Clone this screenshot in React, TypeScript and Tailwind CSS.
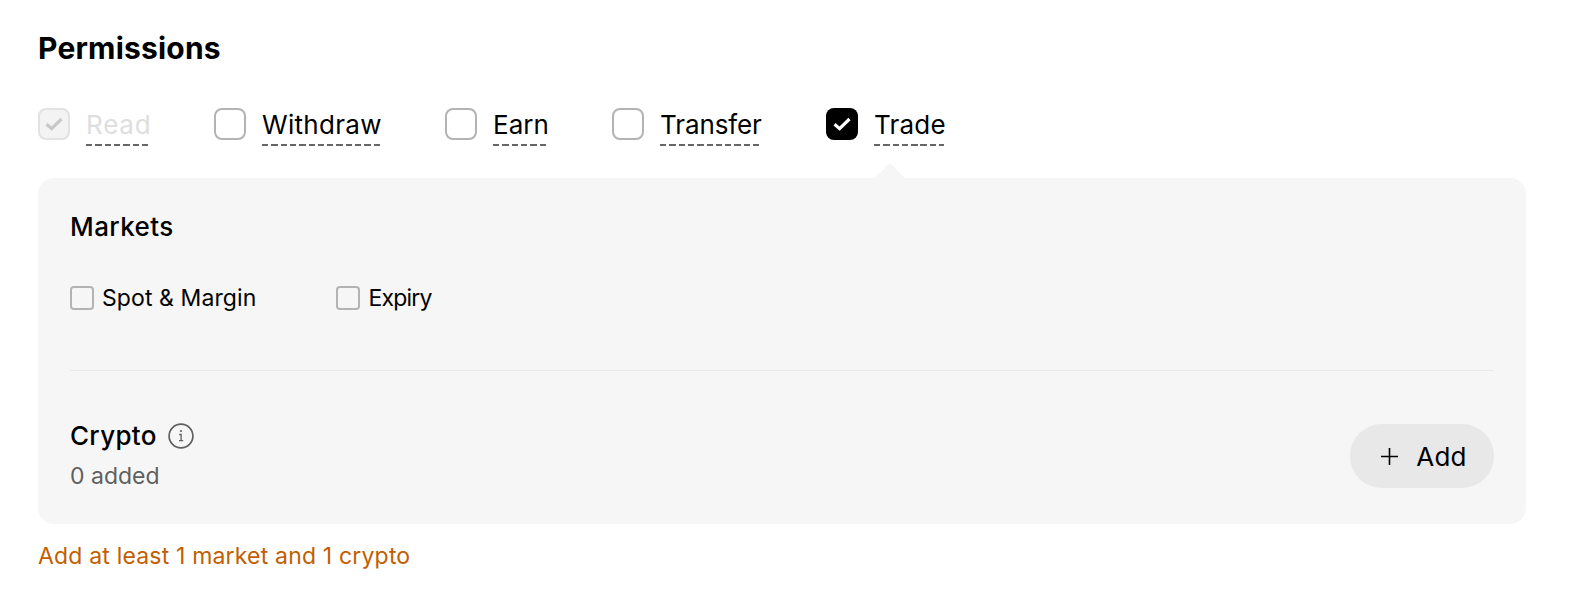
const permissions = [
  { label: 'Read', state: 'disabled', width: 'w-[64px] tracking-[0.8px]' },
  { label: 'Withdraw', state: 'off', width: 'w-[119px] tracking-[0.3px]' },
  { label: 'Earn', state: 'off', width: 'w-[55px]' },
  { label: 'Transfer', state: 'off', width: 'w-[102px] tracking-[-0.1px]' },
  { label: 'Trade', state: 'on', width: 'w-[70px] tracking-[0.2px]' },
]

function Check({ color }: { color: string }) {
  return (
    <svg width="20" height="20" viewBox="0 0 20 20" fill="none">
      <path d="M2.5 10.2L7.6 14.6L17.5 5" stroke={color} strokeWidth="3.2" />
    </svg>
  )
}

function PermissionBox({ state }: { state: string }) {
  if (state === 'on') {
    return (
      <span className="w-8 h-8 rounded-lg bg-black flex items-center justify-center">
        <Check color="#ffffff" />
      </span>
    )
  }
  if (state === 'disabled') {
    return (
      <span className="w-8 h-8 rounded-lg border-2 border-[#e2e2e2] bg-[#f3f3f3] flex items-center justify-center">
        <Check color="#c8c8c8" />
      </span>
    )
  }
  return <span className="w-8 h-8 rounded-lg border-2 border-[#b3b3b3] bg-white" />
}

function MarketOption({ label, spacing }: { label: string; spacing: string }) {
  return (
    <label className="flex items-center gap-2">
      <span className="w-6 h-6 rounded-[4px] border-2 border-[#b3b3b3]" />
      <span className={`text-[23px] leading-8 text-black ${spacing}`}>{label}</span>
    </label>
  )
}

export default function App() {
  return (
    <main className="w-[1578px] h-[600px] bg-white pl-[38px] pr-[52px] pt-[28px] font-['Inter',sans-serif] overflow-hidden">
      <h1 className="text-[30px] leading-10 font-bold text-black tracking-[0.2px]">Permissions</h1>

      {/* Permission checkboxes */}
      <div className="flex gap-16 mt-[40px]">
        {permissions.map((p) => (
          <div key={p.label} className="flex gap-4">
            <PermissionBox state={p.state} />
            <div className="flex flex-col mt-[1px]">
              <span
                className={`text-[26px] leading-8 whitespace-nowrap ${p.width} ${p.state === 'disabled' ? 'text-[#dedede]' : 'text-black'}`}
              >
                {p.label}
              </span>
              <span className="h-[2px] mt-[3px] bg-[repeating-linear-gradient(90deg,#666666_0,#666666_6.3px,transparent_6.3px,transparent_9.3px)]" />
            </div>
          </div>
        ))}
      </div>

      {/* Trade panel */}
      <section className="relative mt-[32px] h-[346px] rounded-2xl bg-[#f6f6f6] px-8 pt-[33px]">
        <span className="absolute -top-[15px] left-[836px] w-0 h-0 border-x-[16px] border-x-transparent border-b-[16px] border-b-[#f6f6f6]" />
        <h2 className="text-[26px] leading-8 font-medium text-black tracking-[0.4px]">Markets</h2>
        <div className="flex gap-20 mt-[39px]">
          <MarketOption label="Spot & Margin" spacing="tracking-[0.1px]" />
          <MarketOption label="Expiry" spacing="tracking-[-0.8px]" />
        </div>
        <div className="h-px bg-[#ebebeb] mt-[56px]" />
        <div className="flex items-center justify-between mt-[49px]">
          <div className="flex flex-col">
            <div className="flex items-center gap-[11px]">
              <span className="text-[26px] leading-8 font-medium text-black tracking-[0.3px]">Crypto</span>
              <svg width="26" height="26" viewBox="0 0 26 26" fill="none" stroke="#606060">
                <circle cx="13" cy="13" r="11.9" strokeWidth="1.7" />
                <path d="M11.2 11.5h1.9v6M11 17.7h4.2" strokeWidth="1.3" />
                <circle cx="13" cy="8" r="1.1" fill="#606060" stroke="none" />
              </svg>
            </div>
            <span className="text-[23px] leading-8 text-[#5f5f5f] mt-[8px]">0 added</span>
          </div>
          <button className="w-[144px] h-16 pl-1 rounded-full bg-[#e8e8e8] flex items-center justify-center gap-[18px] text-[26px] text-black tracking-[0.3px]">
            <svg width="17" height="17" viewBox="0 0 17 17" fill="none" stroke="#000000" strokeWidth="1.6">
              <path d="M8.5 0v17M0 8.5h17" />
            </svg>
            Add
          </button>
        </div>
      </section>

      <p className="mt-[16px] text-[23px] leading-8 text-[#c25e00] tracking-[0.18px]">Add at least 1 market and 1 crypto</p>
    </main>
  )
}
